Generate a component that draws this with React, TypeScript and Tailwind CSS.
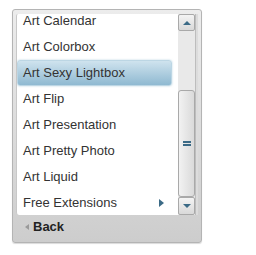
const items = [
  "Art Calendar",
  "Art Colorbox",
  "Art Sexy Lightbox",
  "Art Flip",
  "Art Presentation",
  "Art Pretty Photo",
  "Art Liquid",
  "Free Extensions",
];

export default function App() {
  return (
    <div className="w-[256px] h-[255px] bg-white pl-[12px] pt-[9px] font-['Liberation_Sans',Arial,sans-serif]">
      {/* panel */}
      <div className="w-[190px] h-[234px] rounded-[3px] border border-[#b4b4b4] bg-gradient-to-b from-[#ececec] to-[#cdcdcd] shadow-[0_1px_1px_rgba(0,0,0,0.15)] pt-[4px] pl-[3px] pr-[3px] flex flex-col">
        {/* list + scrollbar */}
        <div className="h-[201px] flex bg-white border-l border-[#c8c8c8] rounded-tl-[2px] rounded-bl-[3px]">
          <div className="flex-1 overflow-hidden">
            <div className="-mt-[6px]">
              {items.map((item) => {
                const active = item === "Art Sexy Lightbox";
                return (
                  <div
                    key={item}
                    className={
                      active
                        ? "h-[26px] w-[155px] flex items-center pl-[5px] text-[13px] text-[#333] rounded-[3px] border border-[#bcd6e4] bg-gradient-to-b from-[#cfe3ee] to-[#8fb9d1] shadow-[0_0_2px_rgba(120,170,200,0.6)]"
                      : "h-[26px] flex items-center pl-[6px] pr-[14px] text-[13px] text-[#333]"
                    }
                  >
                    <span className="flex-1">{item}</span>
                    {item === "Free Extensions" && (
                      <span className="w-0 h-0 border-y-[4px] border-y-transparent border-l-[5px] border-l-[#3b6a86]" />
                    )}
                  </div>
                );
              })}
            </div>
          </div>
          {/* scrollbar */}
          <div className="w-[20px] flex bg-[#e9e9e9]">
            <div className="w-[17px] flex flex-col">
              <div className="h-[17px] rounded-[2px] border border-[#a9a9a9] bg-gradient-to-b from-[#f4f4f4] to-[#d9d9d9] flex items-center justify-center">
                <span className="w-0 h-0 border-x-[4px] border-x-transparent border-b-[4px] border-b-[#3b6a86]" />
              </div>
              <div className="h-[59px]" />
              <div className="h-[107px] rounded-[3px] border border-[#a9a9a9] bg-gradient-to-r from-[#f2f2f2] to-[#dadada] flex flex-col items-center justify-center gap-[1px]">
                <span className="w-[8px] h-[2px] bg-[#3b6a86]" />
                <span className="w-[8px] h-[2px] bg-[#3b6a86]" />
              </div>
              <div className="h-[18px] rounded-[2px] border border-[#a9a9a9] bg-gradient-to-b from-[#f4f4f4] to-[#d9d9d9] flex items-center justify-center">
                <span className="w-0 h-0 border-x-[4px] border-x-transparent border-t-[4px] border-t-[#3b6a86]" />
              </div>
            </div>
            <div className="w-[3px] border-l border-[#bdbdbd] bg-[#dcdcdc]" />
          </div>
        </div>
        {/* back */}
        <div className="h-[24px] flex items-center pl-[9px] gap-[4px]">
          <span className="w-0 h-0 border-y-[3px] border-y-transparent border-r-[4px] border-r-[#9a9a9a]" />
          <span className="text-[13px] font-bold text-[#222]">Back</span>
        </div>
      </div>
    </div>
  );
}
